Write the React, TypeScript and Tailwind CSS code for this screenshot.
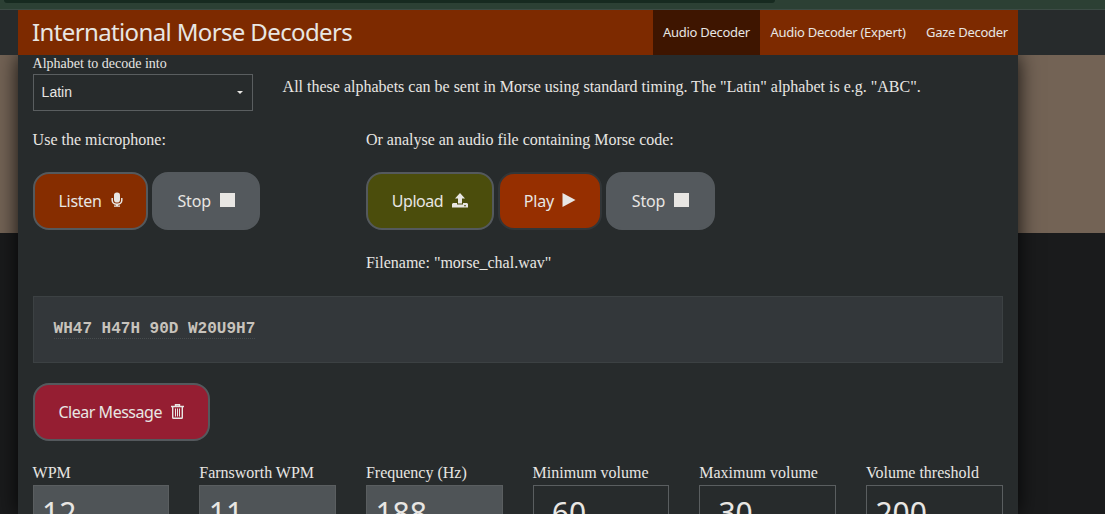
import type { ReactNode } from "react";

const sans = "font-['Noto_Sans','Liberation_Sans',sans-serif]";

const MicIcon = () => (
  <svg width="12" height="16" viewBox="0 0 12 16" className="mb-[2px] ml-[9px]" fill="currentColor">
    <rect x="3" y="0.5" width="6" height="10" rx="2.8" />
    <path d="M1.200 6v2.200c0 2.300 2 4 4.800 4s4.800-1.700 4.800-4V6" fill="none" stroke="currentColor" strokeWidth="1.500" />
    <path d="M5 12h2v1.400h2v1.400H3v-1.400h2z" />
  </svg>
);
const StopIcon = () => <span className="mb-[2px] ml-[9px] h-[14px] w-[15px] bg-[#e8e6e3]" />;
const UploadIcon = () => (
  <svg width="16" height="15" viewBox="0 0 16 15" className="mb-[2px] ml-[9px]" fill="currentColor">
    <path d="M8 0l5 5.500H10V10.500H6V5.500H3z" />
    <path fillRule="evenodd" d="M1 10H5v1.500h6V10h4L16 11V14.500H0V11zM12 12.200v1h2v-1z" />
  </svg>
);
const PlayIcon = () => (
  <svg width="14" height="14" viewBox="0 0 14 14" className="mb-[2px] ml-[8.500px]" fill="currentColor">
    <path d="M0.500 0L13.500 7L0.500 14z" />
  </svg>
);
const TrashIcon = () => (
  <svg width="13" height="15" viewBox="0 0 13 15" className="mb-[2px] ml-[9.500px]" fill="none" stroke="currentColor">
    <path d="M0 2.500h13M4.500 2V.7h4V2" strokeWidth="1.400" />
    <path d="M1.700 3v10.400q0 .8.8.8h8q.8 0 .8-.8V3" strokeWidth="1.400" />
    <path d="M4.500 4.500v8M6.500 4.500v8M8.500 4.500v8" strokeWidth="1" />
  </svg>
);

function Button({ className, children }: { className: string; children: ReactNode }) {
  return (
    <button
      className={`${sans} flex h-[58px] shrink-0 items-center whitespace-nowrap rounded-[16px] border-2 pl-[23.900px] text-[16px] ${className}`}
    >
      {children}
    </button>
  );
}

const fields = [
  { label: "WPM", value: "12", box: "bg-[#4f5457]" },
  { label: "Farnsworth WPM", value: "11", box: "bg-[#4f5457]" },
  { label: "Frequency (Hz)", value: "188", box: "bg-[#4f5457]" },
  { label: "Minimum volume", value: "-60", box: "" },
  { label: "Maximum volume", value: "-30", box: "" },
  { label: "Volume threshold", value: "200", box: "" },
];

export default function App() {
  return (
    <div className="flex h-[514px] w-[1105px] flex-col overflow-hidden bg-[#1a1b1c] font-['Liberation_Serif',serif] text-[16px] leading-[24px] text-[#e8e6e3]">
      <div className="h-[10px] shrink-0 border-b border-[#3c4b45] bg-[#2c4034] pl-[4px]">
        <div className="h-[3px] w-[771px] rounded-b-[6px] bg-[#172a20]" />
      </div>
      <header className="relative z-10 h-[45px] shrink-0 bg-[#272b2c] pl-[18px]">
        <div className={`${sans} flex h-full w-[1000px] items-center bg-[#7d2a00] pl-[14px]`}>
          <h1 className="flex-1 whitespace-nowrap pb-[2px] text-[24px] font-normal tracking-[-0.630px]">International Morse Decoders</h1>
          <nav className="flex h-full whitespace-nowrap text-[13px] tracking-[-0.280px]">
            <a className="flex w-[107px] items-center justify-center bg-[#3e1500] pb-[2px]">Audio Decoder</a>
            <a className="flex w-[156px] items-center justify-center pb-[2px]">Audio Decoder (Expert)</a>
            <a className="flex w-[102px] items-center justify-center pb-[2px]">Gaze Decoder</a>
          </nav>
        </div>
      </header>
      <div className="flex-1 bg-[linear-gradient(to_bottom,#736355_0,#736355_178px,#1a1b1c_178px)] pl-[18px]">
        <main className="h-[459px] w-[1000px] bg-[#272b2c] pl-[14.600px] pr-[15.400px] shadow-[0_0_20px_rgba(0,0,0,0.85)]">
          <section className="flex h-[56px]">
            <div className="w-[220px]">
              <div className="h-[19px] text-[14px] leading-[17px]">Alphabet to decode into</div>
              <div className="flex h-[37px] items-center justify-between border border-[#5a5e60] pl-[8px] pr-[9px] font-['Liberation_Sans',sans-serif] text-[14px]">
                <span className="pb-[2px]">Latin</span>
                <svg width="6" height="3" viewBox="0 0 6 3" fill="currentColor"><path d="M0 0h6L3 3z" /></svg>
              </div>
            </div>
            <p className="ml-[30px] mt-[20px] whitespace-nowrap">
              All these alphabets can be sent in Morse using standard timing. The "Latin" alphabet is e.g. "ABC".
            </p>
          </section>
          <section className="flex pt-[17px]">
            <div className="w-[333.300px]">
              <p className="h-[44px]">Use the microphone:</p>
              <div className="flex gap-[4px]">
                <Button className="w-[115px] border-[#54595d] bg-[#862d00]"><span className="tracking-[-0.300px]">Listen</span><MicIcon /></Button>
                <Button className="w-[108px] border-[#54595d] bg-[#54595d]"><span className="tracking-[-0.150px]">Stop</span><StopIcon /></Button>
              </div>
            </div>
            <div>
              <p className="h-[44px]">Or analyse an audio file containing Morse code:</p>
              <div className="flex">
                <Button className="w-[128px] border-[#54595d] bg-[#4b4d0c]"><span className="tracking-[-0.450px]">Upload</span><UploadIcon /></Button>
                <Button className="ml-[4px] w-[104px] border-[#323638] bg-[#962f00]"><span className="tracking-[-0.200px]">Play</span><PlayIcon /></Button>
                <Button className="ml-[4px] w-[109px] border-[#54595d] bg-[#54595d]"><span className="tracking-[-0.150px]">Stop</span><StopIcon /></Button>
              </div>
              <p className="mt-[21px]">Filename: "morse_chal.wav"</p>
            </div>
          </section>
          <section className="mt-[21px] h-[67px] border border-[#3c4143] bg-[#33373a] pl-[20px] pt-[22px]">
            <div className="h-[20px] w-fit border-b border-dotted border-[#484d4f] font-['Liberation_Mono',monospace] text-[16px] font-bold leading-[20px] text-[#c8c3bc]">
              WH47 H47H 90D W20U9H7
            </div>
          </section>
          <Button className="mt-[20px] w-[177px] border-[#54595d] bg-[#951e32]"><span className="tracking-[-0.480px]">Clear Message</span><TrashIcon /></Button>
          <section className="mt-[20px] grid grid-cols-6 gap-x-[30px]">
            {fields.map((f) => (
              <label key={f.label} className="block whitespace-nowrap">
                <span className="block">{f.label}</span>
                <span className={`${sans} block h-[58px] border border-[#5a5e60] pl-[8.500px] text-[30px] leading-[54px] ${f.box}`}>{f.value}</span>
              </label>
            ))}
          </section>
        </main>
      </div>
    </div>
  );
}
